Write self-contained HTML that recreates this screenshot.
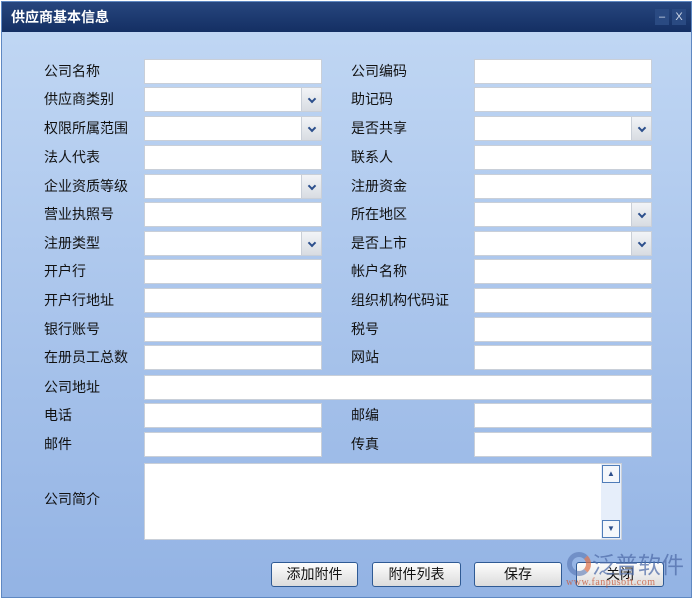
<!DOCTYPE html>
<html><head><meta charset="utf-8"><style>
*{margin:0;padding:0;box-sizing:border-box}
body{width:693px;height:600px;background:#fff;position:relative;overflow:hidden;font-family:"Liberation Sans","Noto Sans CJK SC",sans-serif;font-size:14px;color:#111}
.win{position:absolute;left:1px;top:1px;width:691px;height:597px;border:1px solid #5f88c2;background:linear-gradient(#c2d8f4,#93b3e4)}
.tb{position:absolute;left:0;top:0;width:100%;height:30px;background:linear-gradient(#27467e,#142f63);color:#fff;font-weight:bold;font-size:14px;line-height:30px;padding-left:9px}
.ctl{position:absolute;top:7px;width:14px;height:16px;background:#2a4a82;color:#cfd8e8;font-size:11px;line-height:16px;text-align:center;font-weight:normal}
.l{position:absolute;font-size:14px;line-height:20px}
.i{position:absolute;height:25px;background:#fff;border:1px solid #c9cfd8}
.s::after{content:"";position:absolute;right:0;top:0;width:19px;height:23px;background:linear-gradient(#f2f4f7,#d8dce2);border-left:1px solid #c9cfd8}
.s::before{content:"";position:absolute;right:6px;top:8px;width:4px;height:4px;border-right:2px solid #2c4f8c;border-bottom:2px solid #2c4f8c;transform:rotate(45deg);z-index:2}
.b{position:absolute;top:562px;height:25px;border:1px solid #2f5a94;border-radius:3px;background:linear-gradient(#fdfdfd,#dcdcdc);text-align:center;line-height:23px;font-size:14px}
</style></head><body>
<div class="win">
<div class="tb">供应商基本信息<div class="ctl" style="left:653px">–</div><div class="ctl" style="left:670px">X</div></div>
</div>
<div class="l" style="left:44px;top:61px">公司名称</div><div class="i" style="left:144px;top:59px;width:178px"></div>
<div class="l" style="left:351px;top:61px">公司编码</div><div class="i" style="left:474px;top:59px;width:178px"></div>
<div class="l" style="left:44px;top:89px">供应商类别</div><div class="i s" style="left:144px;top:87px;width:178px"></div>
<div class="l" style="left:351px;top:89px">助记码</div><div class="i" style="left:474px;top:87px;width:178px"></div>
<div class="l" style="left:44px;top:118px">权限所属范围</div><div class="i s" style="left:144px;top:116px;width:178px"></div>
<div class="l" style="left:351px;top:118px">是否共享</div><div class="i s" style="left:474px;top:116px;width:178px"></div>
<div class="l" style="left:44px;top:147px">法人代表</div><div class="i" style="left:144px;top:145px;width:178px"></div>
<div class="l" style="left:351px;top:147px">联系人</div><div class="i" style="left:474px;top:145px;width:178px"></div>
<div class="l" style="left:44px;top:176px">企业资质等级</div><div class="i s" style="left:144px;top:174px;width:178px"></div>
<div class="l" style="left:351px;top:176px">注册资金</div><div class="i" style="left:474px;top:174px;width:178px"></div>
<div class="l" style="left:44px;top:204px">营业执照号</div><div class="i" style="left:144px;top:202px;width:178px"></div>
<div class="l" style="left:351px;top:204px">所在地区</div><div class="i s" style="left:474px;top:202px;width:178px"></div>
<div class="l" style="left:44px;top:233px">注册类型</div><div class="i s" style="left:144px;top:231px;width:178px"></div>
<div class="l" style="left:351px;top:233px">是否上市</div><div class="i s" style="left:474px;top:231px;width:178px"></div>
<div class="l" style="left:44px;top:261px">开户行</div><div class="i" style="left:144px;top:259px;width:178px"></div>
<div class="l" style="left:351px;top:261px">帐户名称</div><div class="i" style="left:474px;top:259px;width:178px"></div>
<div class="l" style="left:44px;top:290px">开户行地址</div><div class="i" style="left:144px;top:288px;width:178px"></div>
<div class="l" style="left:351px;top:290px">组织机构代码证</div><div class="i" style="left:474px;top:288px;width:178px"></div>
<div class="l" style="left:44px;top:319px">银行账号</div><div class="i" style="left:144px;top:317px;width:178px"></div>
<div class="l" style="left:351px;top:319px">税号</div><div class="i" style="left:474px;top:317px;width:178px"></div>
<div class="l" style="left:44px;top:347px">在册员工总数</div><div class="i" style="left:144px;top:345px;width:178px"></div>
<div class="l" style="left:351px;top:347px">网站</div><div class="i" style="left:474px;top:345px;width:178px"></div>
<div class="l" style="left:44px;top:377px">公司地址</div><div class="i" style="left:144px;top:375px;width:508px"></div>
<div class="l" style="left:44px;top:405px">电话</div><div class="i" style="left:144px;top:403px;width:178px"></div>
<div class="l" style="left:351px;top:405px">邮编</div><div class="i" style="left:474px;top:403px;width:178px"></div>
<div class="l" style="left:44px;top:434px">邮件</div><div class="i" style="left:144px;top:432px;width:178px"></div>
<div class="l" style="left:351px;top:434px">传真</div><div class="i" style="left:474px;top:432px;width:178px"></div>
<div class="l" style="left:44px;top:489px">公司简介</div>
<div class="i" style="left:144px;top:463px;width:478px;height:77px">
 <div style="position:absolute;right:0;top:0;width:20px;height:75px;background:#e6eefa"></div>
 <div style="position:absolute;right:1px;top:1px;width:18px;height:18px;border:1px solid #4f7cb8;background:#f4f7fb;color:#2c4f8c;font-size:8px;text-align:center;line-height:16px">▲</div>
 <div style="position:absolute;right:1px;bottom:1px;width:18px;height:18px;border:1px solid #4f7cb8;background:#f4f7fb;color:#2c4f8c;font-size:8px;text-align:center;line-height:16px">▼</div>
</div>
<div class="b" style="left:271px;width:87px">添加附件</div>
<div class="b" style="left:372px;width:89px">附件列表</div>
<div class="b" style="left:474px;width:88px">保存</div>
<div class="b" style="left:576px;width:88px">关闭</div>
<div style="position:absolute;left:592px;top:551px;white-space:nowrap;color:rgba(80,110,170,0.75);font-size:23px;line-height:28px">泛普软件</div>
<div style="position:absolute;left:566px;top:578px;white-space:nowrap;font-family:'Liberation Serif',serif;font-size:10px;line-height:10px;color:rgba(200,90,60,0.8);letter-spacing:0.5px">www.fanpusoft.com</div>
<div style="position:absolute;left:567px;top:552px;width:24px;height:24px;border-radius:50%;border:5px solid rgba(90,120,180,0.6);border-right-color:rgba(220,110,70,0.7)"></div>
</body></html>
